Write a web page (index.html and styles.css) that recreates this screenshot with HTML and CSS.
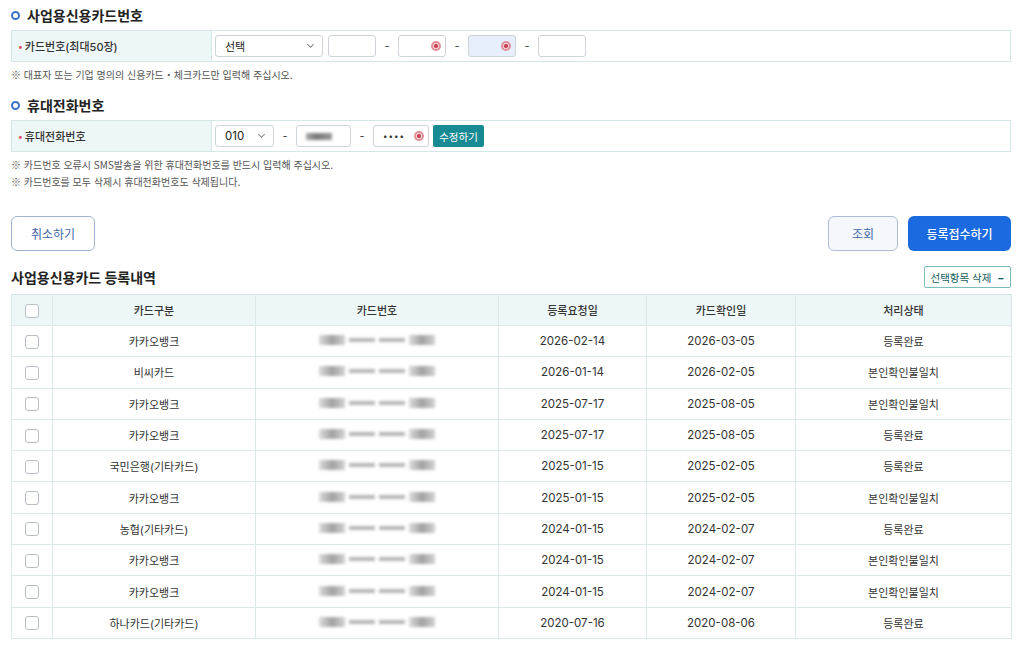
FILE: index.html
```html
<!DOCTYPE html>
<html lang="ko">
<head>
    <meta charset="UTF-8">
    <meta name="viewport" content="width=device-width, initial-scale=1.0">
    <title>사업용신용카드 등록</title>
    <link rel="stylesheet" href="styles.css">
</head>
<body>
<div class="page">
    <h2 class="sec-title"><span class="ring"></span>사업용신용카드번호</h2>
    <div class="form-row">
        <div class="form-label"><span class="req">•</span>카드번호(최대50장)</div>
        <div class="form-field">
            <div class="select sel-card">선택<span class="caret"></span></div>
            <div class="inp w48"></div>
            <span class="dash">-</span>
            <div class="inp w48"><span class="mask-ico"></span></div>
            <span class="dash">-</span>
            <div class="inp w48 focus"><span class="mask-ico"></span></div>
            <span class="dash">-</span>
            <div class="inp w48"></div>
        </div>
    </div>
    <p class="note first">※ 대표자 또는 기업 명의의 신용카드・체크카드만 입력해 주십시오.</p>

    <h2 class="sec-title t2"><span class="ring"></span>휴대전화번호</h2>
    <div class="form-row">
        <div class="form-label"><span class="req">•</span>휴대전화번호</div>
        <div class="form-field">
            <div class="select sel-phone">010<span class="caret"></span></div>
            <span class="dash d2">-</span>
            <div class="inp w54"><span class="blur-num"></span></div>
            <span class="dash d2">-</span>
            <div class="inp w55 dots">••••<span class="mask-ico"></span></div>
            <button class="btn-edit">수정하기</button>
        </div>
    </div>
    <p class="note first">※ 카드번호 오류시 SMS발송을 위한 휴대전화번호를 반드시 입력해 주십시오.</p>
    <p class="note">※ 카드번호를 모두 삭제시 휴대전화번호도 삭제됩니다.</p>

    <div class="actions">
        <button class="btn btn-line">취소하기</button>
        <div class="actions-right">
            <button class="btn btn-light">조회</button>
            <button class="btn btn-primary">등록접수하기</button>
        </div>
    </div>

    <div class="list-head">
        <h3 class="list-title">사업용신용카드 등록내역</h3>
        <button class="btn-del">선택항목 삭제 <span class="minus">−</span></button>
    </div>

    <table class="grid">
        <colgroup>
            <col style="width:41px"><col style="width:203px"><col style="width:243px">
            <col style="width:148px"><col style="width:149px"><col>
        </colgroup>
        <thead>
            <tr><th><span class="chk"></span></th><th>카드구분</th><th>카드번호</th><th>등록요청일</th><th>카드확인일</th><th>처리상태</th></tr>
        </thead>
        <tbody id="rows"></tbody>
    </table>
</div>

<script>
    // 등록내역 목록
    const rows = [
        ['카카오뱅크', '2026-02-14', '2026-03-05', '등록완료'],
        ['비씨카드', '2026-01-14', '2026-02-05', '본인확인불일치'],
        ['카카오뱅크', '2025-07-17', '2025-08-05', '본인확인불일치'],
        ['카카오뱅크', '2025-07-17', '2025-08-05', '등록완료'],
        ['국민은행(기타카드)', '2025-01-15', '2025-02-05', '등록완료'],
        ['카카오뱅크', '2025-01-15', '2025-02-05', '본인확인불일치'],
        ['농협(기타카드)', '2024-01-15', '2024-02-07', '등록완료'],
        ['카카오뱅크', '2024-01-15', '2024-02-07', '본인확인불일치'],
        ['카카오뱅크', '2024-01-15', '2024-02-07', '본인확인불일치'],
        ['하나카드(기타카드)', '2020-07-16', '2020-08-06', '등록완료']
    ];
    const tbody = document.getElementById('rows');
    tbody.innerHTML = rows.map(r => `
        <tr>
            <td><span class="chk"></span></td>
            <td>${r[0]}</td>
            <td><span class="card-blur"><i class="b1"></i><i class="b2"></i><i class="b2"></i><i class="b1"></i></span></td>
            <td class="num">${r[1]}</td>
            <td class="num">${r[2]}</td>
            <td>${r[3]}</td>
        </tr>`).join('');
</script>
</body>
</html>
```

FILE: styles.css
```css
body {
    margin: 0;
    font-family: Inter, "Noto Sans CJK KR", sans-serif;
    color: #333;
    background: #fff;
}
.page {
    width: 1000px;
    padding: 5px 0 0 11px;
}
.sec-title {
    display: flex;
    align-items: center;
    margin: 0;
    height: 20px;
    font-size: 14px;
    font-weight: 700;
    color: #222;
}
.sec-title.t2 {
    margin-top: 12px;
}
.ring {
    width: 5px;
    height: 5px;
    border: 2px solid #3b73c9;
    border-radius: 50%;
    margin: 0 7px 0 0;
}
.form-row {
    display: flex;
    height: 30px;
    border: 1px solid #d5e6e6;
    margin-top: 5px;
}
.form-label {
    width: 193px;
    padding-left: 6px;
    background: #eef7f7;
    border-right: 1px solid #d5e6e6;
    display: flex;
    align-items: center;
    font-size: 11px;
    font-weight: 500;
    color: #333;
}
.req {
    color: #e0465a;
    font-size: 9px;
    margin-right: 2px;
}
.form-field {
    display: flex;
    align-items: center;
    padding-left: 3px;
}
.select, .inp {
    height: 20px;
    border: 1px solid #cdd3d9;
    border-radius: 3px;
    background: #fff;
    box-sizing: content-box;
    position: relative;
    font-size: 11px;
    display: flex;
    align-items: center;
}
.select {
    padding-left: 9px;
    color: #222;
}
.sel-card {
    width: 97px;
    margin-right: 5px;
}
.sel-phone {
    width: 48px;
    font-size: 11.5px;
}
.caret {
    position: absolute;
    right: 9px;
    top: 6px;
    width: 4px;
    height: 4px;
    border-right: 1px solid #888;
    border-bottom: 1px solid #888;
    transform: rotate(45deg);
}
.w48 { width: 46px; }
.w54 { width: 53px; }
.w55 { width: 54px; }
.inp.focus {
    background: #e7effd;
}
.dash {
    width: 22px;
    text-align: center;
    font-size: 11px;
    color: #444;
}
.mask-ico {
    position: absolute;
    right: 4px;
    top: 5px;
    width: 10px;
    height: 10px;
    border-radius: 50%;
    background: radial-gradient(circle, #c9485a 0 1.8px, #f3c9ce 2.3px 3px, #e0909b 3.4px 5px);
}
.dots {
    padding-left: 9px;
    width: 45px;
    font-size: 8px;
    letter-spacing: 1px;
    color: #333;
}
.blur-num {
    display: block;
    margin-left: 9px;
    width: 26px;
    height: 7px;
    background: linear-gradient(90deg, #aaa, #777 40%, #999);
    filter: blur(1.5px);
}
.btn-edit {
    margin-left: 4px;
    height: 22px;
    width: 51px;
    border: 0;
    border-radius: 2px;
    background: #178a93;
    color: #fff;
    font-family: inherit;
    font-size: 10.5px;
    padding: 0;
}
.note {
    margin: 0;
    font-family: "Noto Sans CJK KR", sans-serif;
    font-size: 10px;
    line-height: 17px;
    color: #555;
}
.note.first {
    margin-top: 4px;
}
.actions {
    display: flex;
    justify-content: space-between;
    margin-top: 26px;
}
.actions-right {
    display: flex;
    gap: 10px;
}
.btn {
    height: 35px;
    border-radius: 6px;
    font-family: inherit;
    font-size: 12px;
    padding: 0;
}
.btn-line {
    width: 84px;
    border: 1px solid #9fb3cf;
    background: #fff;
    color: #3f67a8;
}
.btn-light {
    width: 70px;
    border: 1px solid #aebbd0;
    background: #f4f7fb;
    color: #3f67a8;
}
.btn-primary {
    width: 103px;
    border: 0;
    background: #1c6ae0;
    color: #fff;
    font-weight: 500;
}
.list-head {
    display: flex;
    justify-content: space-between;
    align-items: center;
    margin-top: 15px;
    height: 22px;
}
.list-title {
    margin: 0;
    font-size: 14px;
    font-weight: 700;
    color: #222;
}
.btn-del {
    height: 22px;
    width: 87px;
    border: 1px solid #7fbdbd;
    border-radius: 2px;
    background: #fff;
    color: #14605f;
    font-family: inherit;
    font-size: 10.5px;
    padding: 0;
}
.minus {
    font-weight: 700;
    margin-left: 3px;
}
.grid {
    margin-top: 6px;
    width: 1001px;
    border-collapse: collapse;
    table-layout: fixed;
    font-size: 11px;
}
.grid th, .grid td {
    border: 1px solid #dce9e9;
    height: 30px;
    padding: 0;
    text-align: center;
    color: #333;
}
.grid th {
    background: #eef7f7;
    font-weight: 500;
    border-top-color: #d2e4e4;
}
.grid td {
    height: 30.3px;
}
.num {
    font-size: 11.5px;
}
.chk {
    display: inline-block;
    width: 12px;
    height: 12px;
    border: 1px solid #b9bec4;
    border-radius: 3px;
    vertical-align: middle;
    background: #fff;
}
.card-blur {
    display: inline-flex;
    align-items: center;
    gap: 4px;
    filter: blur(1.4px);
    opacity: 0.8;
}
.card-blur i {
    display: block;
}
.card-blur i.b1 {
    width: 26px;
    height: 10px;
    background: linear-gradient(90deg, #d4d4d4, #8a8a8a 50%, #c8c8c8);
}
.card-blur i.b2 {
    width: 26px;
    height: 4px;
    background: #a5a5a5;
}
```
